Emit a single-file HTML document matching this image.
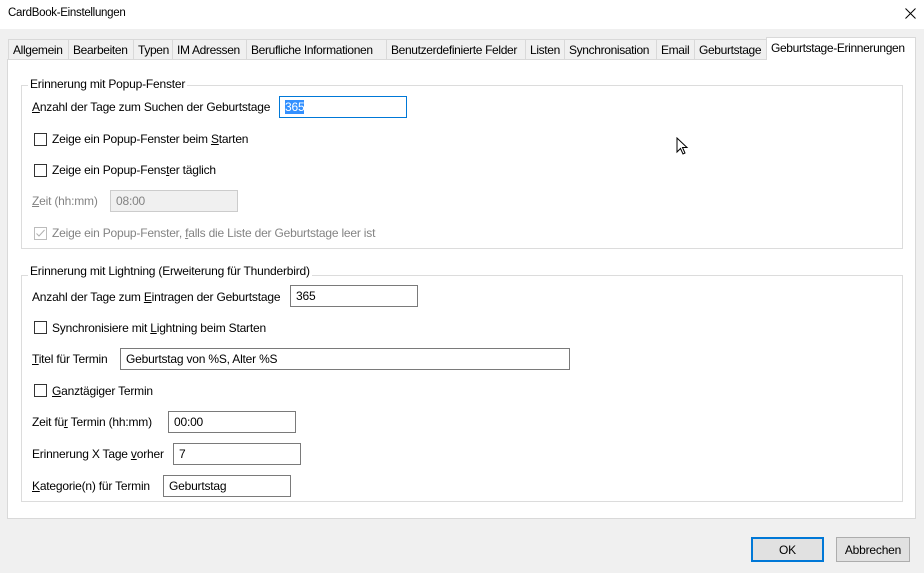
<!DOCTYPE html>
<html><head><meta charset="utf-8"><style>
*{box-sizing:border-box}
body{margin:0;width:924px;height:573px;background:#f0f0f0;font-family:"Liberation Sans",sans-serif;font-size:12px;letter-spacing:-0.2px;color:#000;position:relative;overflow:hidden}
.a{position:absolute;white-space:nowrap}
.title{position:absolute;left:0;top:0;width:924px;height:29px;background:#fff}
.tab{position:absolute;top:39px;height:20px;border:1px solid #d9d9d9;border-bottom:none;background:#f0f0f0;padding:3px 0 0 4px;font-size:12px;letter-spacing:-0.35px;white-space:nowrap;overflow:hidden}
.tab.act{top:37px;height:23px;background:#fff;z-index:2;padding-top:3px}
.panel{position:absolute;left:7px;top:59px;width:909px;height:460px;background:#fff;border:1px solid #d9d9d9}
.gb{position:absolute;border:1px solid #dcdcdc}
.gt{position:absolute;background:#fff;padding:0 2px}
.in{position:absolute;height:22px;border:1px solid #7a7a7a;background:#fff;padding:3px 0 0 5px;white-space:nowrap}
.cb{position:absolute;width:13px;height:13px;border:1px solid #333;background:#fff}
.btn{position:absolute;top:537px;height:25px;border:1px solid #adadad;background:#e1e1e1;text-align:center;padding-top:5px}
u{text-decoration:underline}
.dis{color:#838383}
</style></head><body>
<div class="title"></div>
<div class="a" style="left:8px;top:7px;font-size:11.5px;letter-spacing:-0.3px">CardBook-Einstellungen</div>
<svg class="a" style="left:905px;top:8px" width="11" height="11" viewBox="0 0 11 11"><path d="M0.5 0.5 L10.5 10.5 M10.5 0.5 L0.5 10.5" stroke="#000" stroke-width="1"/></svg>

<div class="tab" style="left:8px;width:61px">Allgemein</div>
<div class="tab" style="left:68px;width:66px">Bearbeiten</div>
<div class="tab" style="left:133px;width:40px">Typen</div>
<div class="tab" style="left:172px;width:75px">IM Adressen</div>
<div class="tab" style="left:246px;width:141px">Berufliche Informationen</div>
<div class="tab" style="left:386px;width:140px">Benutzerdefinierte Felder</div>
<div class="tab" style="left:525px;width:40px">Listen</div>
<div class="tab" style="left:564px;width:93px">Synchronisation</div>
<div class="tab" style="left:656px;width:39px">Email</div>
<div class="tab" style="left:694px;width:73px">Geburtstage</div>
<div class="tab act" style="left:766px;width:150px">Geburtstage-Erinnerungen</div>

<div class="panel"></div>

<div class="gb" style="left:21px;top:85px;width:882px;height:164px"></div>
<div class="gt a" style="left:28px;top:77px">Erinnerung mit Popup-Fenster</div>
<div class="a" style="left:32px;top:100px"><u>A</u>nzahl der Tage zum Suchen der Geburtstage</div>
<div class="in" style="left:279px;top:96px;width:128px;border-color:#0078d7"><span style="background:#3390ff;color:#fff">365</span></div>
<div class="cb" style="left:34px;top:133px"></div>
<div class="a" style="left:52px;top:132px">Zeige ein Popup-Fenster beim <u>S</u>tarten</div>
<div class="cb" style="left:34px;top:164px"></div>
<div class="a" style="left:52px;top:163px">Zeige ein Popup-Fens<u>t</u>er täglich</div>
<div class="a dis" style="left:32px;top:194px"><u>Z</u>eit (hh:mm)</div>
<div class="in dis" style="left:110px;top:190px;width:128px;background:#f0f0f0;border-color:#ccc">08:00</div>
<div class="cb" style="left:34px;top:227px;border-color:#bcbcbc"></div>
<svg class="a" style="left:34px;top:227px" width="13" height="13" viewBox="0 0 13 13"><path d="M2.5 6.5 L5 9 L10.5 3" fill="none" stroke="#b0b0b0" stroke-width="1"/></svg>
<div class="a dis" style="left:52px;top:226px">Zeige ein Popup-Fenster, <u>f</u>alls die Liste der Geburtstage leer ist</div>

<div class="gb" style="left:21px;top:275px;width:882px;height:227px"></div>
<div class="gt a" style="left:28px;top:264px">Erinnerung mit Lightning (Erweiterung für Thunderbird)</div>
<div class="a" style="left:32px;top:290px">Anzahl der Tage zum <u>E</u>intragen der Geburtstage</div>
<div class="in" style="left:290px;top:285px;width:128px">365</div>
<div class="cb" style="left:34px;top:321px"></div>
<div class="a" style="left:52px;top:321px">Synchronisiere mit <u>L</u>ightning beim Starten</div>
<div class="a" style="left:32px;top:352px"><u>T</u>itel für Termin</div>
<div class="in" style="left:120px;top:348px;width:450px">Geburtstag von %S, Alter %S</div>
<div class="cb" style="left:34px;top:384px"></div>
<div class="a" style="left:52px;top:384px"><u>G</u>anztägiger Termin</div>
<div class="a" style="left:32px;top:415px">Zeit fü<u>r</u> Termin (hh:mm)</div>
<div class="in" style="left:168px;top:411px;width:128px">00:00</div>
<div class="a" style="left:32px;top:447px">Erinnerung X Tage <u>v</u>orher</div>
<div class="in" style="left:173px;top:443px;width:128px">7</div>
<div class="a" style="left:32px;top:479px"><u>K</u>ategorie(n) für Termin</div>
<div class="in" style="left:163px;top:475px;width:128px">Geburtstag</div>

<div class="btn" style="left:751px;width:73px;border:2px solid #0078d7;padding-top:4px">OK</div>
<div class="btn" style="left:836px;width:74px">Abbrechen</div>

<svg class="a" style="left:676px;top:137px" width="14" height="20" viewBox="0 0 14 20"><path d="M1 1 L1 15 L4.5 11.5 L7 17 L9 16 L6.5 10.5 L11 10.5 Z" fill="#fff" stroke="#000" stroke-width="1"/></svg>
</body></html>
